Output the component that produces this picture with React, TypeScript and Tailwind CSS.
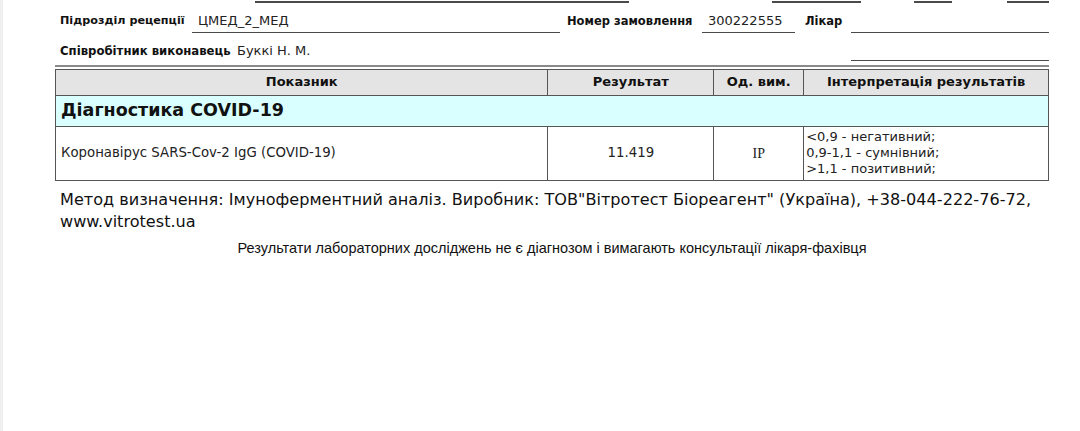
const tahoma = "font-['DejaVu_Sans',sans-serif]";

function Field({ w, children }: { w: string; children?: React.ReactNode }) {
  return (
    <div className={`${w} h-[24px] border-b-[1.5px] border-[#4a4a4a] px-[6px] text-[13px] leading-[24px] text-[#222]`}>
      {children}
    </div>
  );
}

export default function App() {
  return (
    <div className={`flex min-h-screen bg-white text-[#111] ${tahoma}`}>
      {/* left edge of the viewer */}
      <div className="w-[3px] shrink-0 bg-[#efefef]" />

      <div className="ml-[52px] w-[994px]">
        {/* fields cut off at the top */}
        <div className="relative flex h-[4px] items-start">
          <div className="ml-[200px] mt-[1px] h-[1.5px] w-[374px] bg-[#4a4a4a]" />
          <div className="ml-[143px] mt-[1px] h-[1.5px] w-[89px] bg-[#4a4a4a]" />
          <div className="ml-[53px] mt-[1px] h-[1.5px] w-[38px] bg-[#4a4a4a]" />
          <div className="ml-[55px] mt-[1px] h-[1.5px] w-[42px] bg-[#4a4a4a]" />
        </div>

        {/* row 1 */}
        <div className="mt-[5px] flex items-end">
          <div className="w-[137px] pl-[5px] text-[11.2px] font-bold leading-[24px]">Підрозділ рецепції</div>
          <Field w="w-[368px]">ЦМЕД_2_МЕД</Field>
          <div className="ml-[7px] w-[135px] text-[11.5px] font-bold leading-[24px]">Номер замовлення</div>
          <Field w="w-[93px]">300222555</Field>
          <div className="ml-[10px] w-[46px] text-[11.5px] font-bold leading-[24px]">Лікар</div>
          <Field w="w-[198px]" />
        </div>

        {/* row 2 */}
        <div className="mt-[8px] flex items-end">
          <div className="w-[182px] pl-[5px] text-[11.7px] font-bold leading-[20px]">Співробітник виконавець</div>
          <div className="w-[614px] text-[13px] leading-[20px] text-[#222]">Буккі Н. М.</div>
          <div className="h-[20px] w-[198px] border-b-[1.5px] border-[#4a4a4a]" />
        </div>
        <div className="mt-[4px] h-[1.5px] w-full bg-[#8a8a8a]" />

        {/* results table */}
        <table className="mt-[2px] w-full border-collapse border-[1.5px] border-[#555]">
          <colgroup>
            <col className="w-[493px]" />
            <col className="w-[166px]" />
            <col className="w-[90px]" />
            <col className="w-[245px]" />
          </colgroup>
          <thead>
            <tr className="h-[26px] bg-[#e4e4e4] text-[13px] font-bold">
              <th className="border border-[#555] text-center">Показник</th>
              <th className="border border-[#555] text-center">Результат</th>
              <th className="border border-[#555] text-center">Од. вим.</th>
              <th className="border border-[#555] text-center">Інтерпретація результатів</th>
            </tr>
          </thead>
          <tbody>
            <tr className="h-[31px] bg-[#d9ffff]">
              <td colSpan={4} className="border border-[#555] pl-[5px] text-[17.5px] font-bold">
                Діагностика COVID-19
              </td>
            </tr>
            <tr className="h-[54px] text-[13.3px] text-[#222]">
              <td className="border border-[#555] pl-[5px]">Коронавірус SARS-Cov-2 IgG (COVID-19)</td>
              <td className="border border-[#555] text-center">11.419</td>
              <td className="border border-[#555] text-center font-['Liberation_Serif',serif] text-[14px]">IP</td>
              <td className="border border-[#555] pl-[2px] text-[13px] leading-[16px]">
                &lt;0,9 - негативний;
                <br />
                0,9-1,1 - сумнівний;
                <br />
                &gt;1,1 - позитивний;
              </td>
            </tr>
          </tbody>
        </table>

        {/* method */}
        <p className="mt-[8px] pl-[5px] text-[16.1px] leading-[22px] text-[#111]">
          Метод визначення: Імуноферментний аналіз. Виробник: ТОВ"Вітротест Біореагент" (Україна), +38-044-222-76-72,
          www.vitrotest.ua
        </p>

        <p className="mt-[7px] text-center font-['Liberation_Sans',sans-serif] text-[14.5px] leading-[16px] text-[#111]">
          Результати лабораторних досліджень не є діагнозом і вимагають консультації лікаря-фахівця
        </p>
      </div>
    </div>
  );
}
